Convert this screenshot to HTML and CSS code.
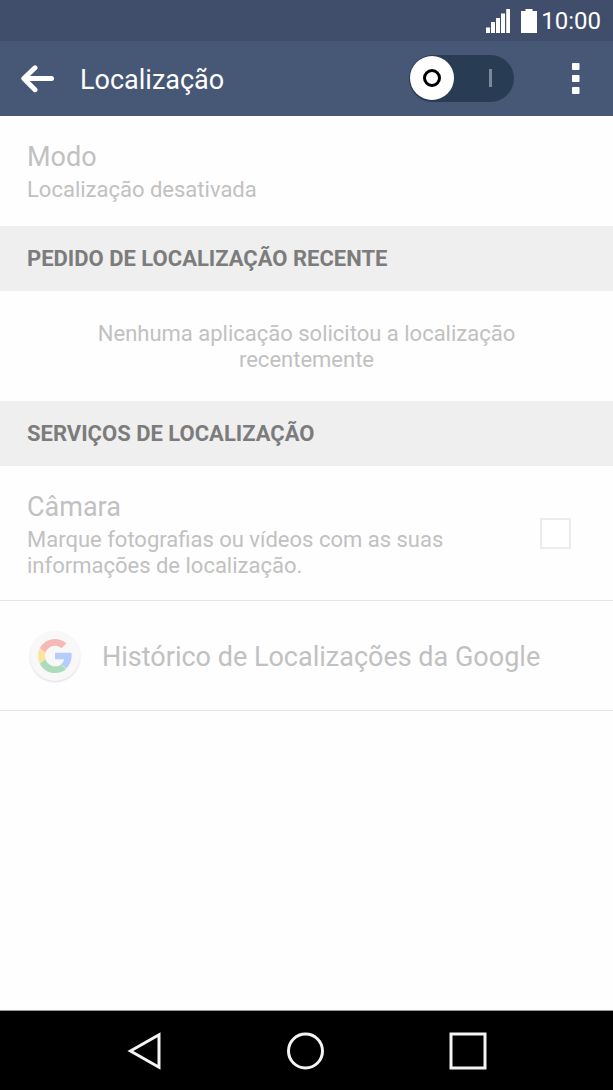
FILE: index.html
```html
<!DOCTYPE html>
<html lang="pt">
<head>
<meta charset="utf-8">
<meta name="viewport" content="width=device-width, initial-scale=1">
<title>Localização</title>
<link rel="stylesheet" href="styles.css">
</head>
<body>
<div class="screen">
  <div class="status-bar">
    <svg class="signal" width="24" height="24" viewBox="0 0 24 24" fill="currentColor" aria-hidden="true">
      <path d="M0 18.500h4V24H0zM5 13h4v11H5zM10 9h4v15h-4zM15 4.500h4V24h-4zM20.200 0H24v24h-3.800z"/>
    </svg>
    <svg class="battery" width="16" height="24" viewBox="0 0 16 24" fill="currentColor" aria-hidden="true">
      <path d="M4.500 0h7v2H16v22H0V2h4.500z"/>
    </svg>
    <time class="clock">10:00</time>
  </div>

  <header class="app-bar">
    <button class="back" type="button" aria-label="Voltar">
      <svg width="33" height="28" viewBox="0 0 33 28" fill="none" stroke="currentColor" stroke-width="5" stroke-linecap="round" stroke-linejoin="round" aria-hidden="true">
        <path d="M14 2.800 2.800 13.500l11.200 11.200M3.500 13.500h27"/>
      </svg>
    </button>
    <h1 class="title">Localização</h1>
    <label class="switch">
      <input class="switch-input" type="checkbox" role="switch" aria-label="Localização">
      <span class="thumb"></span>
      <span class="on-mark"></span>
    </label>
    <button class="menu" type="button" aria-label="Mais opções">
      <svg width="8" height="32" viewBox="0 0 8 32" fill="currentColor" aria-hidden="true">
        <rect width="7.500" height="7" rx="0.800"/><rect y="12" width="7.500" height="7" rx="0.800"/><rect y="24" width="7.500" height="7" rx="0.800"/>
      </svg>
    </button>
  </header>

  <main class="content">
    <section class="row">
      <div class="row-text">
        <h2 class="name">Modo</h2>
        <p class="detail">Localização desativada</p>
      </div>
    </section>

    <h2 class="section-title">PEDIDO DE LOCALIZAÇÃO RECENTE</h2>
    <p class="empty">Nenhuma aplicação solicitou a localização recentemente</p>

    <h2 class="section-title">SERVIÇOS DE LOCALIZAÇÃO</h2>
    <div class="row row-camera">
      <label class="row-text" for="camera">
        <span class="name">Câmara</span>
        <span class="detail">Marque fotografias ou vídeos com as suas informações de localização.</span>
      </label>
      <input class="checkbox" id="camera" type="checkbox" disabled>
    </div>
    <div class="row row-history">
      <span class="google">
        <svg width="34" height="34" viewBox="0 0 48 48" aria-hidden="true">
          <path fill="#f6b9b5" d="M24 9.500c3.540 0 6.710 1.220 9.210 3.600l6.850-6.850C35.900 2.380 30.470 0 24 0 14.620 0 6.510 5.380 2.560 13.220l7.980 6.190C12.430 13.720 17.740 9.500 24 9.500z"/>
          <path fill="#b4cdfa" d="M47.500 24c0-1.570-.15-3.090-.38-4.550H24v9.020h12.940c-.58 2.960-2.260 5.480-4.780 7.180l7.730 6C44.400 37.470 47.500 31.370 47.500 24z"/>
          <path fill="#fde3a0" d="M10.530 28.590c-.48-1.450-.76-2.990-.76-4.590s.27-3.140.76-4.590l-7.980-6.190C.92 16.460 0 20.120 0 24s.92 7.540 2.560 10.780l7.970-6.190z"/>
          <path fill="#aedcba" d="M24 48c6.480 0 11.930-2.130 15.890-5.810l-7.730-6c-2.150 1.450-4.920 2.300-8.160 2.300-6.260 0-11.570-4.220-13.470-9.910l-7.980 6.190C6.510 42.620 14.620 48 24 48z"/>
        </svg>
      </span>
      <h2 class="name">Histórico de Localizações da Google</h2>
    </div>
  </main>

  <nav class="nav-bar">
    <button class="nav-button" type="button" aria-label="Anterior">
      <svg width="38" height="40" viewBox="0 0 38 40" fill="none" stroke="currentColor" stroke-width="3" aria-hidden="true"><path d="M35 3.800v32.400L6.500 20z"/></svg>
    </button>
    <button class="nav-button" type="button" aria-label="Início">
      <svg width="38" height="40" viewBox="0 0 38 40" fill="none" stroke="currentColor" stroke-width="3" aria-hidden="true"><circle cx="19.500" cy="20" r="17"/></svg>
    </button>
    <button class="nav-button" type="button" aria-label="Recentes">
      <svg width="38" height="40" viewBox="0 0 38 40" fill="none" stroke="currentColor" stroke-width="3" aria-hidden="true"><path d="M2 3h34v34H2z"/></svg>
    </button>
  </nav>
</div>
</body>
</html>
```
FILE: styles.css
```css
*,
*::before {
  box-sizing: border-box;
}

body,
h1,
h2,
p {
  margin: 0;
}

body {
  font-family: Roboto, "Liberation Sans", sans-serif;
  background: #fefefe;
  color: #c1c1c1;
}

button {
  display: flex;
  align-items: center;
  justify-content: center;
  padding: 0;
  border: 0;
  background: none;
  color: inherit;
}

.screen {
  display: flex;
  flex-direction: column;
  min-height: 100vh;
}

.status-bar {
  display: flex;
  align-items: center;
  justify-content: flex-end;
  height: 41px;
  padding-right: 12px;
  background: #404e6b;
  color: #fff;
}

.battery {
  margin: 0 4px 0 11px;
}

.clock {
  padding-top: 1px;
  font-size: 24px;
  line-height: 28px;
}

.app-bar {
  display: flex;
  align-items: center;
  height: 75px;
  padding-left: 21px;
  background: #465876;
  color: #fff;
}

.title {
  flex: 1;
  margin-left: 26px;
  padding-top: 2px;
  font-size: 27px;
  font-weight: 400;
  line-height: 32px;
}

.switch {
  position: relative;
  display: flex;
  width: 105px;
  height: 47px;
}

.switch-input {
  appearance: none;
  width: 100%;
  height: 100%;
  margin: 0;
  border-radius: 24px;
  background: #283c54;
}

.thumb {
  position: absolute;
  top: 1px;
  left: 1px;
  display: grid;
  place-items: center;
  width: 44px;
  height: 44px;
  border-radius: 50%;
  background: #fff;
}

.thumb::before {
  content: "";
  width: 18px;
  height: 18px;
  border: 3px solid #000;
  border-radius: 50%;
}

.on-mark {
  position: absolute;
  top: 14px;
  right: 22px;
  width: 3px;
  height: 18px;
  background: #7c8897;
}

.menu {
  width: 75px;
  height: 75px;
  margin-left: 24px;
}

.content {
  flex: 1;
}

.row {
  display: flex;
  align-items: center;
  min-height: 110px;
  padding: 0 28px 0 27px;
}

.row-text {
  display: grid;
  flex: 1;
  gap: 3px;
}

.name,
.detail {
  display: block;
  font-weight: 400;
}

.name {
  font-size: 27px;
  line-height: 34px;
}

.detail {
  font-size: 22px;
  line-height: 26px;
}

.section-title {
  padding: 1px 27px 0;
  background: #efefef;
  color: #7c7c7c;
  font-size: 22px;
  font-weight: 700;
  line-height: 64px;
}

.empty {
  padding: 30px 80px 28px;
  font-size: 22px;
  line-height: 26px;
  text-align: center;
}

.row-camera {
  gap: 80px;
  min-height: 135px;
  padding-right: 42px;
  border-bottom: 1px solid #e6e6e6;
}

.row-camera .row-text {
  padding-top: 3px;
}

.checkbox {
  appearance: none;
  flex: none;
  width: 31px;
  height: 31px;
  margin: 0;
  border: 2px solid #ececec;
  background: #fff;
}

.row-history {
  gap: 22px;
  border-bottom: 1px solid #e6e6e6;
}

.row-history .name {
  padding-top: 2px;
}

.google {
  display: grid;
  flex: none;
  place-items: center;
  width: 50px;
  height: 50px;
  margin-left: 3px;
  border-radius: 50%;
  background: #f8f8f8;
  box-shadow: 0 1px 2px #dcdcdc;
}

.nav-bar {
  display: flex;
  height: 80px;
  padding: 0 64px 0 62px;
  border-top: 1px solid #999;
  background: #000;
  color: #f4f4f4;
}

.nav-button {
  flex: 1;
}
```
